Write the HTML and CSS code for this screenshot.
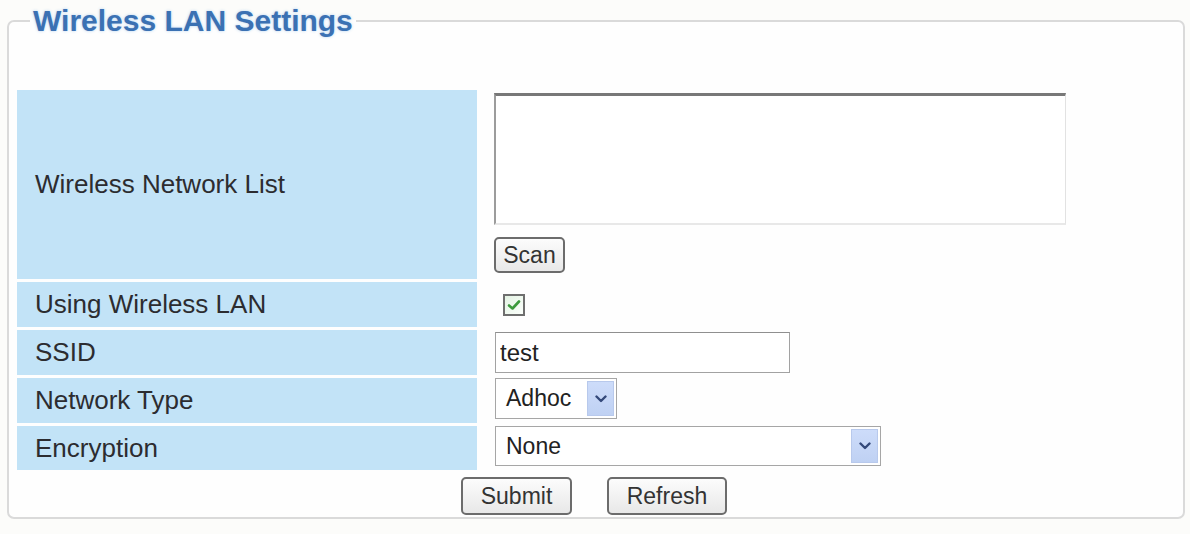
FILE: index.html
```html
<!DOCTYPE html>
<html>
<head>
<meta charset="utf-8">
<title>Wireless LAN Settings</title>
<link rel="stylesheet" href="styles.css">
</head>
<body>
<fieldset class="panel">
  <legend class="panel-title">Wireless LAN Settings</legend>
  <table class="settings">
    <colgroup><col class="col-label"><col class="col-value"></colgroup>
    <tr class="row-list">
      <td class="label">Wireless Network List</td>
      <td class="value value-top">
        <textarea class="netlist"></textarea>
        <div class="scan-wrap"><button class="btn btn-scan">Scan</button></div>
      </td>
    </tr>
    <tr class="row">
      <td class="label">Using Wireless LAN</td>
      <td class="value">
        <span class="checkbox"><svg width="14" height="12" viewBox="0 0 14 12"><path d="M2 6.5 L5.5 9.5 L12 2.5" fill="none" stroke="#3c9a3c" stroke-width="2.6" stroke-linecap="round" stroke-linejoin="round"/></svg></span>
      </td>
    </tr>
    <tr class="row">
      <td class="label">SSID</td>
      <td class="value"><input class="text" type="text" value="test"></td>
    </tr>
    <tr class="row">
      <td class="label">Network Type</td>
      <td class="value">
        <div class="select select-type"><span class="select-text">Adhoc</span><span class="arrow"><svg width="12" height="8" viewBox="0 0 12 8"><path d="M1.5 1.5 L6 6 L10.5 1.5" fill="none" stroke="#34497a" stroke-width="2.4" stroke-linecap="round" stroke-linejoin="round"/></svg></span></div>
      </td>
    </tr>
    <tr class="row row-last">
      <td class="label">Encryption</td>
      <td class="value">
        <div class="select select-enc"><span class="select-text">None</span><span class="arrow"><svg width="12" height="8" viewBox="0 0 12 8"><path d="M1.5 1.5 L6 6 L10.5 1.5" fill="none" stroke="#34497a" stroke-width="2.4" stroke-linecap="round" stroke-linejoin="round"/></svg></span></div>
      </td>
    </tr>
  </table>
  <div class="actions">
    <button class="btn btn-submit">Submit</button>
    <button class="btn btn-refresh">Refresh</button>
  </div>
</fieldset>
</body>
</html>
```
FILE: styles.css
```css
html, body {
  margin: 0;
  padding: 0;
  background: #fcfcfa;
}
body {
  font-family: "Liberation Sans", Arial, sans-serif;
  color: #2a2a2a;
  width: 1190px;
  height: 534px;
  overflow: hidden;
}
.panel {
  margin: 4px 0 0 7px;
  width: 1178px;
  box-sizing: border-box;
  border: 2px solid #dadada;
  border-radius: 7px;
  padding: 49px 0 2px 5px;
  background: #fefefe;
}
.panel-title {
  margin-left: 16px;
  padding: 0 3px;
  font-size: 30px;
  line-height: 34px;
  font-weight: bold;
  color: #3b71b3;
  text-shadow: 0 0 3px rgba(170, 205, 240, 0.9);
}
.settings {
  border-collapse: separate;
  border-spacing: 3px;
  table-layout: fixed;
  width: 1149px;
}
.col-label { width: 460px; }
.col-value { width: 680px; }
.label {
  background: #c2e3f7;
  padding: 0 0 0 18px;
  font-size: 26px;
  vertical-align: middle;
  color: #2c2c30;
}
.value {
  padding: 0 0 0 14px;
  vertical-align: middle;
}
.value-top {
  vertical-align: top;
  padding-top: 3px;
}
.row-list td { height: 189px; box-sizing: border-box; }
.row td { height: 45px; box-sizing: border-box; }
.row-last td { height: 44px; }
.netlist {
  display: block;
  margin: 0;
  width: 572px;
  height: 132px;
  box-sizing: border-box;
  border-top: 3px solid #787878;
  border-left: 2px solid #9c9c9c;
  border-right: 1px solid #e2e2e2;
  border-bottom: 2px solid #e8e8e8;
  background: #fff;
  resize: none;
  outline: none;
}
.scan-wrap {
  margin-top: 12px;
}
.btn {
  font-family: "Liberation Sans", Arial, sans-serif;
  font-size: 23px;
  color: #333;
  border: 2px solid #6c6c6c;
  border-radius: 5px;
  background: linear-gradient(#fcfcfc, #e8e8e8);
  padding: 0;
  margin: 0;
  box-sizing: border-box;
}
.btn-scan { width: 71px; height: 36px; }
.btn-submit { width: 111px; height: 38px; }
.btn-refresh { width: 120px; height: 38px; }
.checkbox {
  display: inline-flex;
  align-items: center;
  justify-content: center;
  width: 22px;
  height: 22px;
  box-sizing: border-box;
  margin-left: 9px;
  margin-top: 1px;
  border: 2px solid #6f6f6f;
  background: linear-gradient(135deg, #e4f3e4, #fbfffb);
  vertical-align: middle;
}
.text {
  margin: 0 0 0 1px;
  width: 295px;
  height: 41px;
  box-sizing: border-box;
  border: 1px solid #a2a2a2;
  border-top-color: #8f8f8f;
  padding: 0 0 0 4px;
  font-family: "Liberation Sans", Arial, sans-serif;
  font-size: 24px;
  color: #222;
  background: #fff;
  vertical-align: middle;
  outline: none;
}
.select {
  display: flex;
  align-items: center;
  justify-content: space-between;
  margin-left: 1px;
  box-sizing: border-box;
  border: 1px solid #a6a6a6;
  background: #fff;
  padding: 2px;
  font-size: 23px;
  color: #222;
}
.select-type { width: 122px; height: 41px; margin-top: -4px; }
.select-enc { width: 386px; height: 40px; margin-top: -4px; }
.select-text { padding-left: 8px; }
.arrow {
  display: flex;
  align-items: center;
  justify-content: center;
  width: 27px;
  height: 100%;
  box-sizing: border-box;
  background: linear-gradient(#cddcfa, #bfd1f3);
  border: 1px solid #b8c9ec;
}
.actions {
  display: flex;
  justify-content: center;
  gap: 35px;
  margin-top: 4px;
  padding-right: 9px;
}
```
